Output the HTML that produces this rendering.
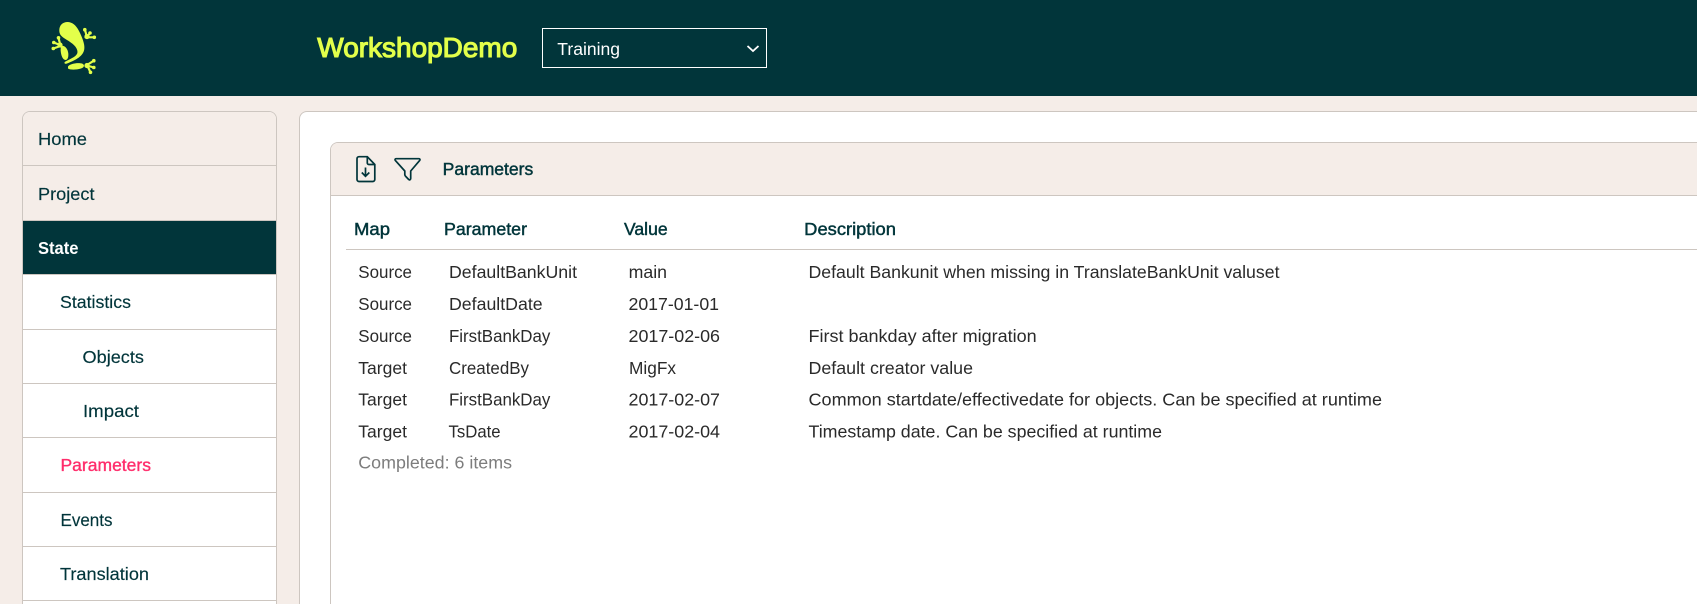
<!DOCTYPE html>
<html lang="en">
<head>
<meta charset="utf-8">
<title>WorkshopDemo - Parameters</title>
<style>
html,body{margin:0;padding:0;width:1697px;height:604px;overflow:hidden;background:#f5ede8}
body{position:relative;font-family:"Liberation Sans",sans-serif}
.hdr{position:absolute;left:0;top:0;width:1697px;height:96px;background:#01353a}
.sel{position:absolute;left:542px;top:28px;width:223px;height:38px;border:1.3px solid #fff}
.side{position:absolute;left:22px;top:111px;width:253px;height:492px;border:1.3px solid #cdc6c0;border-bottom:0;border-radius:8px 8px 0 0;background:#fff;overflow:hidden}
.row{position:absolute;left:0;width:253px;border-bottom:1.3px solid #cdc6c0;box-sizing:border-box}
.cream{background:#f5ede8}
.dark{background:#01353a;border-bottom-color:#cdc6c0}
.main{position:absolute;left:299px;top:111px;width:1397px;height:492px;border:1.3px solid #cdc6c0;border-right:0;border-bottom:0;border-radius:8px 0 0 0;background:#fff}
.card{position:absolute;left:330px;top:142px;width:1366px;height:461px;border:1.3px solid #cdc6c0;border-right:0;border-bottom:0;border-radius:8px 0 0 0;background:#fff;overflow:hidden}
.chead{position:absolute;left:0;top:0;width:100%;height:52px;background:#f5ede8;border-bottom:1.3px solid #cdc6c0}
.tline{position:absolute;left:346px;top:249px;width:1351px;height:1.3px;background:#cdc6c0}
svg{position:absolute;left:0;top:0}
text{font-family:"Liberation Sans",sans-serif;font-size:17.2px}
.n{fill:#01353a;stroke:#01353a;stroke-width:.15px}
.t{fill:#2a2a2a}
.h{fill:#01353a;stroke:#01353a;stroke-width:.45px}
.g{fill:#7d7d7d}
</style>
</head>
<body>
<div class="hdr"></div>
<div class="sel"></div>
<div class="side">
  <div class="row cream" style="top:0;height:54px"></div>
  <div class="row cream" style="top:54px;height:55px"></div>
  <div class="row dark" style="top:109px;height:54px"></div>
  <div class="row" style="top:163px;height:55px"></div>
  <div class="row" style="top:218px;height:54px"></div>
  <div class="row" style="top:272px;height:54px"></div>
  <div class="row" style="top:326px;height:55px"></div>
  <div class="row" style="top:381px;height:54px"></div>
  <div class="row" style="top:435px;height:54px"></div>
</div>
<div class="main"></div>
<div class="card"><div class="chead"></div></div>
<div class="tline"></div>

<svg width="1697" height="604" viewBox="0 0 1697 604" xmlns="http://www.w3.org/2000/svg">
  <!-- logo -->
  <g fill="#e3ff4a">
    <path d="M59.300 31C59 25 63 22 67.500 22C72 22 76 25 79 31C82 37 85 44 84.300 49C83.500 56 76 60 67 63.500C64.500 64.500 63.500 62.500 65.500 61.500C72 58 77.500 56 77.500 52C77.500 47 72 43 67 40C62 37 59.500 35 59.300 31Z"/>
    <path d="M62.500 45.700C65.500 46 68 49.500 68.300 53.500C68.600 57.500 67.500 60 65.500 60C63 60 61 55.500 60.700 51C60.500 48 61 45.700 62.500 45.700Z"/>
    <path d="M68 66.500C70 63.500 78 62.500 82 63.500C85 64.500 84.500 67.500 81 68.500C76 70 70 70 68 68.500Z"/>
    <circle cx="84.800" cy="29.700" r="1.800"/><circle cx="90" cy="33" r="1.800"/><circle cx="94.300" cy="37.300" r="1.800"/>
    <circle cx="58.500" cy="37.800" r="1.800"/><circle cx="53.800" cy="42.500" r="1.800"/><circle cx="53.300" cy="48.500" r="1.800"/>
    <circle cx="93.800" cy="60.700" r="1.800"/><circle cx="93.800" cy="67.500" r="1.800"/><circle cx="90.500" cy="72.300" r="1.800"/>
    <circle cx="87" cy="36.500" r="2.600"/><circle cx="60" cy="45" r="2.600"/><circle cx="87" cy="65.500" r="2.600"/>
  </g>
  <g stroke="#e3ff4a" stroke-width="2.200" stroke-linecap="round" fill="none">
    <path d="M87 37L84.800 29.500M87 37L90 33M85.500 37.300L94.300 37.300"/>
    <path d="M60.500 46L58.500 37.800M60 45L53.800 42.500M60.500 46L53.300 48.500"/>
    <path d="M85.500 66L93.800 60.700M87 65.500L93.800 67.500M87 65L90.500 72.300"/>
  </g>

  <!-- header text -->
  <text x="317.300" y="57" textLength="200" lengthAdjust="spacingAndGlyphs" style="font-size:28px;fill:#e3ff4a;stroke:#e3ff4a;stroke-width:1.100px">WorkshopDemo</text>
  <text x="557.300" y="55" textLength="62.700" lengthAdjust="spacingAndGlyphs" style="fill:#fff">Training</text>
  <path d="M747.500 46L753 51L758.500 46" fill="none" stroke="#fff" stroke-width="1.800"/>

  <!-- sidebar text -->
  <text class="n" x="38" y="145" textLength="49" lengthAdjust="spacingAndGlyphs">Home</text>
  <text class="n" x="38" y="200" textLength="56.500" lengthAdjust="spacingAndGlyphs">Project</text>
  <text x="38" y="254" font-weight="700" textLength="40.500" lengthAdjust="spacingAndGlyphs" style="fill:#fff">State</text>
  <text class="n" x="60" y="308" textLength="71" lengthAdjust="spacingAndGlyphs">Statistics</text>
  <text class="n" x="82.500" y="363" textLength="61.500" lengthAdjust="spacingAndGlyphs">Objects</text>
  <text class="n" x="83" y="417" textLength="56" lengthAdjust="spacingAndGlyphs">Impact</text>
  <text x="60.500" y="471" textLength="90.500" lengthAdjust="spacingAndGlyphs" style="fill:#ff2d6b;stroke:#ff2d6b;stroke-width:.35px">Parameters</text>
  <text class="n" x="60.500" y="526" textLength="52" lengthAdjust="spacingAndGlyphs">Events</text>
  <text class="n" x="60" y="580" textLength="89" lengthAdjust="spacingAndGlyphs">Translation</text>

  <!-- card header icons -->
  <path d="M359 156.700H367.300L374.800 164.500V179.500A2 2 0 0 1 372.800 181.500H359A2 2 0 0 1 357 179.500V158.700A2 2 0 0 1 359 156.700Z" fill="none" stroke="#01353a" stroke-width="1.700"/>
  <path d="M367.300 157V163A1.500 1.500 0 0 0 368.800 164.500H374.500" fill="none" stroke="#01353a" stroke-width="1.700"/>
  <path d="M365.500 167.500V176M361.800 172.500L365.500 176.300L369.300 172.500" fill="none" stroke="#01353a" stroke-width="1.700"/>
  <path d="M396 158.700H419A1 1 0 0 1 419.800 160.300L410.700 171V178.500A1.200 1.200 0 0 1 408.700 179.500L405.800 176.500A3 3 0 0 1 404.800 174V171L395.200 160.300A1 1 0 0 1 396 158.700Z" fill="none" stroke="#01353a" stroke-width="1.700" stroke-linejoin="round"/>
  <text class="h" x="442.700" y="175" textLength="90.600" lengthAdjust="spacingAndGlyphs">Parameters</text>

  <!-- table head -->
  <text class="h" x="354" y="235" textLength="36" lengthAdjust="spacingAndGlyphs">Map</text>
  <text class="h" x="444" y="235" textLength="83" lengthAdjust="spacingAndGlyphs">Parameter</text>
  <text class="h" x="624" y="235" textLength="43.600" lengthAdjust="spacingAndGlyphs">Value</text>
  <text class="h" x="804.200" y="235" textLength="91.800" lengthAdjust="spacingAndGlyphs">Description</text>

  <!-- rows -->
  <text class="t" x="358.300" y="278" textLength="53.700" lengthAdjust="spacingAndGlyphs">Source</text>
  <text class="t" x="449" y="278" textLength="128" lengthAdjust="spacingAndGlyphs">DefaultBankUnit</text>
  <text class="t" x="628.600" y="278" textLength="38.400" lengthAdjust="spacingAndGlyphs">main</text>
  <text class="t" x="808.500" y="278" textLength="471" lengthAdjust="spacingAndGlyphs">Default Bankunit when missing in TranslateBankUnit valuset</text>

  <text class="t" x="358.300" y="310" textLength="53.700" lengthAdjust="spacingAndGlyphs">Source</text>
  <text class="t" x="449" y="310" textLength="93.600" lengthAdjust="spacingAndGlyphs">DefaultDate</text>
  <text class="t" x="628.500" y="310" textLength="90.500" lengthAdjust="spacingAndGlyphs">2017-01-01</text>

  <text class="t" x="358.300" y="342" textLength="53.700" lengthAdjust="spacingAndGlyphs">Source</text>
  <text class="t" x="449" y="342" textLength="101.300" lengthAdjust="spacingAndGlyphs">FirstBankDay</text>
  <text class="t" x="628.500" y="342" textLength="91.500" lengthAdjust="spacingAndGlyphs">2017-02-06</text>
  <text class="t" x="808.500" y="342" textLength="228.200" lengthAdjust="spacingAndGlyphs">First bankday after migration</text>

  <text class="t" x="358.300" y="374" textLength="48.700" lengthAdjust="spacingAndGlyphs">Target</text>
  <text class="t" x="449" y="374" textLength="80" lengthAdjust="spacingAndGlyphs">CreatedBy</text>
  <text class="t" x="629" y="374" textLength="47" lengthAdjust="spacingAndGlyphs">MigFx</text>
  <text class="t" x="808.500" y="374" textLength="164.500" lengthAdjust="spacingAndGlyphs">Default creator value</text>

  <text class="t" x="358.300" y="405.700" textLength="48.700" lengthAdjust="spacingAndGlyphs">Target</text>
  <text class="t" x="449" y="405.700" textLength="101.300" lengthAdjust="spacingAndGlyphs">FirstBankDay</text>
  <text class="t" x="628.500" y="405.700" textLength="91.500" lengthAdjust="spacingAndGlyphs">2017-02-07</text>
  <text class="t" x="808.500" y="405.700" textLength="573.500" lengthAdjust="spacingAndGlyphs">Common startdate/effectivedate for objects. Can be specified at runtime</text>

  <text class="t" x="358.300" y="437.600" textLength="48.700" lengthAdjust="spacingAndGlyphs">Target</text>
  <text class="t" x="448.500" y="437.600" textLength="52.100" lengthAdjust="spacingAndGlyphs">TsDate</text>
  <text class="t" x="628.500" y="437.600" textLength="91.500" lengthAdjust="spacingAndGlyphs">2017-02-04</text>
  <text class="t" x="808.500" y="437.600" textLength="353.500" lengthAdjust="spacingAndGlyphs">Timestamp date. Can be specified at runtime</text>

  <text class="g" x="358.300" y="468.700" textLength="153.700" lengthAdjust="spacingAndGlyphs">Completed: 6 items</text>
</svg>
</body>
</html>
